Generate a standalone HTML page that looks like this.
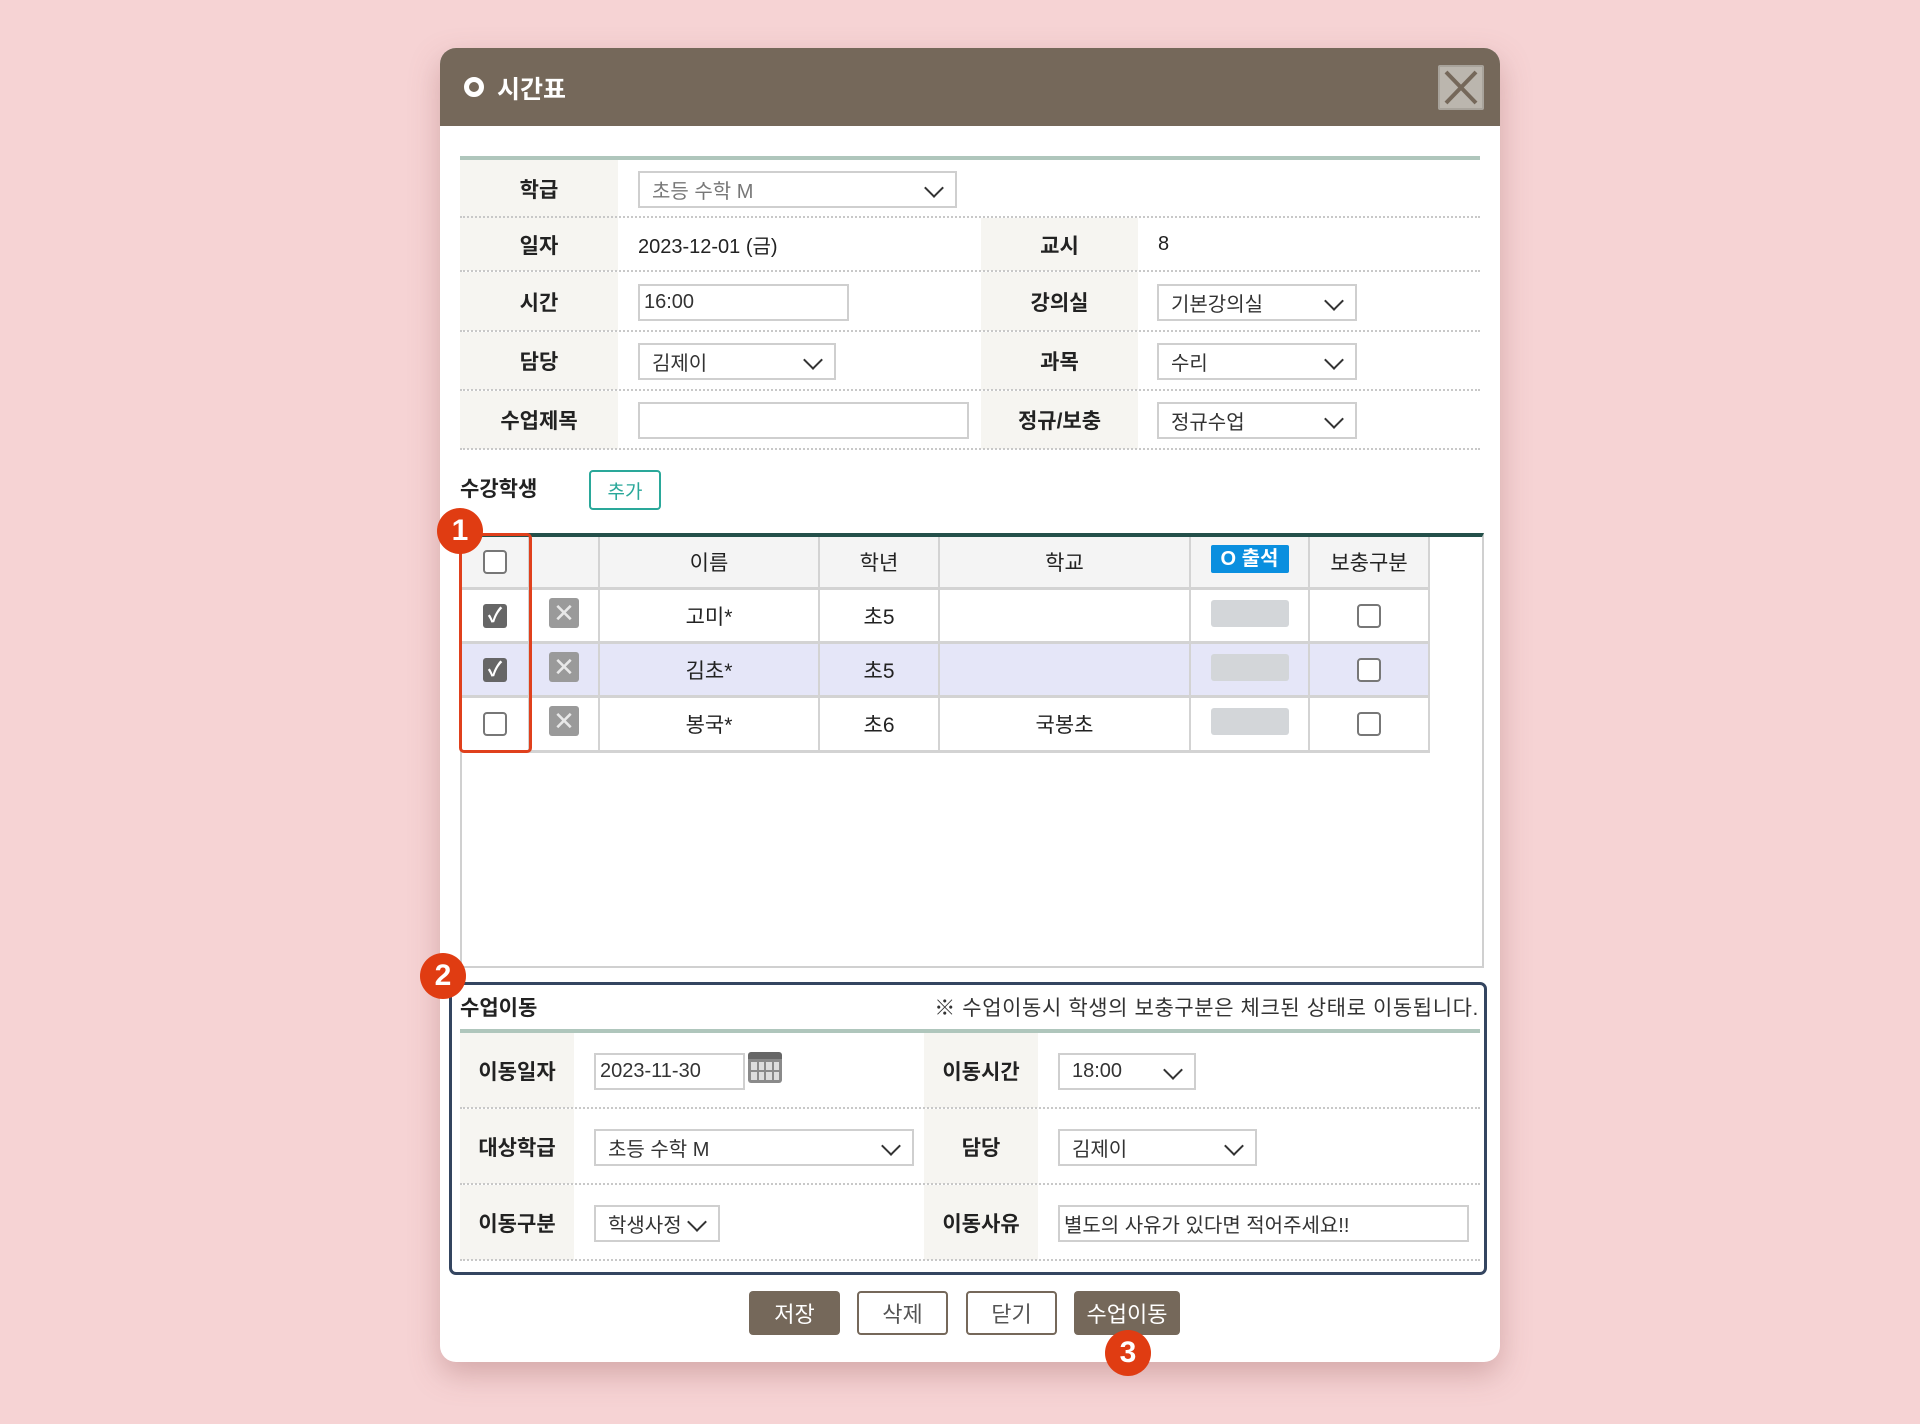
<!DOCTYPE html>
<html><head><meta charset="utf-8"><style>
*{box-sizing:border-box;margin:0;padding:0}
body{width:1920px;height:1424px;background:#f6d3d4;font-family:"Liberation Sans","Noto Sans CJK KR",sans-serif;color:#222;position:relative;overflow:hidden}
.abs{position:absolute}
.modal{left:440px;top:48px;width:1060px;height:1314px;background:#fff;border-radius:16px;box-shadow:0 12px 30px rgba(150,90,90,.35);overflow:hidden}
.hdr{left:0;top:0;width:1060px;height:78px;background:#75685a}
.lbl{background:#f6f5f1;font-weight:bold;font-size:21px;display:flex;align-items:center;justify-content:center}
.dot{border-bottom:2px dotted #c8c8c8}
.fld{border:2px solid #cfcfcf;background:#fff;font-size:20px;display:flex;align-items:center;padding-left:12px;color:#333}
.sel::after{content:"";position:absolute;right:14px;top:8px;width:12px;height:12px;border-right:2px solid #333;border-bottom:2px solid #333;transform:rotate(45deg)}
.txt{font-size:20px;display:flex;align-items:center}
.cell{display:flex;align-items:center;justify-content:center;font-size:21px;border-right:2px solid #d3d3d3;border-bottom:3px solid #d3d3d3}
.cb{width:24px;height:24px;border:2px solid #777;border-radius:4px;background:#fff}
.cbk{width:24px;height:24px;border-radius:3px;background:#666;color:#fff;font-size:20px;line-height:24px;text-align:center;font-weight:bold}
.ic{width:30px;height:30px;background:#9a9a9a;border-radius:3px;color:#e8e8e8;font-size:26px;line-height:30px;text-align:center}
.gr{width:78px;height:27px;background:#d3d6d9;border-radius:3px}
.badge{width:46px;height:46px;border-radius:50%;background:#e03c12;color:#fff;font-weight:bold;font-size:30px;display:flex;align-items:center;justify-content:center}
.btn{height:44px;font-size:22px;display:flex;align-items:center;justify-content:center;border-radius:4px}
.bf{background:#75685a;color:#fff}
.bo{background:#fff;border:2px solid #75685a;color:#555}
</style></head><body>
<div class="abs modal">
 <div class="abs hdr"></div>
 <div class="abs" style="left:24px;top:29px;width:20px;height:20px;border-radius:50%;border:5px solid #fff"></div>
 <div class="abs" style="left:57px;top:22px;color:#fff;font-weight:bold;font-size:25px">시간표</div>
 <div class="abs" style="left:998px;top:17px;width:46px;height:45px;background:#bbb6ae;border:2px solid #a8a39b;border-radius:2px">
  <svg width="42" height="41" viewBox="0 0 42 41"><path d="M6 5L36 36M36 5L6 36" stroke="#75685a" stroke-width="4"/></svg></div>
</div>
<div class="abs" style="left:460px;top:156px;width:1020px;height:4px;background:#afc6bc"></div>
<div class="abs lbl" style="left:460px;top:160px;width:158px;height:58px">학급</div>
<div class="abs dot" style="left:460px;top:216px;width:1020px"></div>
<div class="abs fld sel" style="left:638px;top:171px;width:319px;height:37px;color:#777">초등 수학 M</div>

<div class="abs lbl" style="left:460px;top:218px;width:158px;height:53px">일자</div>
<div class="abs txt" style="left:638px;top:218px;height:53px">2023-12-01 (금)</div>
<div class="abs lbl" style="left:981px;top:218px;width:157px;height:53px">교시</div>
<div class="abs txt" style="left:1158px;top:218px;height:53px">8</div>
<div class="abs dot" style="left:460px;top:270px;width:1020px"></div>

<div class="abs lbl" style="left:460px;top:272px;width:158px;height:59px">시간</div>
<div class="abs fld" style="left:638px;top:284px;width:211px;height:37px;padding-left:4px">16:00</div>
<div class="abs lbl" style="left:981px;top:272px;width:157px;height:59px">강의실</div>
<div class="abs fld sel" style="left:1157px;top:284px;width:200px;height:37px">기본강의실</div>
<div class="abs dot" style="left:460px;top:330px;width:1020px"></div>

<div class="abs lbl" style="left:460px;top:332px;width:158px;height:58px">담당</div>
<div class="abs fld sel" style="left:638px;top:343px;width:198px;height:37px">김제이</div>
<div class="abs lbl" style="left:981px;top:332px;width:157px;height:58px">과목</div>
<div class="abs fld sel" style="left:1157px;top:343px;width:200px;height:37px">수리</div>
<div class="abs dot" style="left:460px;top:389px;width:1020px"></div>

<div class="abs lbl" style="left:460px;top:391px;width:158px;height:58px">수업제목</div>
<div class="abs fld" style="left:638px;top:402px;width:331px;height:37px"></div>
<div class="abs lbl" style="left:981px;top:391px;width:157px;height:58px">정규/보충</div>
<div class="abs fld sel" style="left:1157px;top:402px;width:200px;height:37px">정규수업</div>
<div class="abs dot" style="left:460px;top:448px;width:1020px"></div>

<div class="abs" style="left:460px;top:473px;font-weight:bold;font-size:21px">수강학생</div>
<div class="abs" style="left:589px;top:470px;width:72px;height:40px;border:2px solid #2aa89a;border-radius:4px;color:#2aa89a;font-size:19px;display:flex;align-items:center;justify-content:center">추가</div>

<div class="abs" style="left:460px;top:533px;width:1024px;height:435px;border:2px solid #d0d0d0;border-top:4px solid #24504a"></div>
<div class="abs" style="left:462px;top:537px;width:968px;height:53px;background:#f4f4f4"></div>
<div class="abs" style="left:462px;top:644px;width:968px;height:54px;background:#e5e6f8"></div>
<div class="abs cell" style="left:462px;top:537px;width:68px;height:53px"><div class="cb"></div></div>
<div class="abs cell" style="left:530px;top:537px;width:70px;height:53px"></div>
<div class="abs cell" style="left:600px;top:537px;width:220px;height:53px">이름</div>
<div class="abs cell" style="left:820px;top:537px;width:120px;height:53px">학년</div>
<div class="abs cell" style="left:940px;top:537px;width:251px;height:53px">학교</div>
<div class="abs cell" style="left:1191px;top:537px;width:119px;height:53px;align-items:flex-start;padding-top:8px"><div style="background:#0a8fdf;color:#fff;font-weight:bold;font-size:20px;width:78px;height:28px;border-radius:2px;text-align:center;line-height:28px">O 출석</div></div>
<div class="abs cell" style="left:1310px;top:537px;width:120px;height:53px">보충구분</div>

<div class="abs cell" style="left:462px;top:590px;width:68px;height:54px"><div class="cbk">✓</div></div>
<div class="abs cell" style="left:530px;top:590px;width:70px;height:54px;align-items:flex-start;padding-top:8px"><div class="ic">✕</div></div>
<div class="abs cell" style="left:600px;top:590px;width:220px;height:54px">고미*</div>
<div class="abs cell" style="left:820px;top:590px;width:120px;height:54px">초5</div>
<div class="abs cell" style="left:940px;top:590px;width:251px;height:54px"></div>
<div class="abs cell" style="left:1191px;top:590px;width:119px;height:54px;align-items:flex-start;padding-top:10px"><div class="gr"></div></div>
<div class="abs cell" style="left:1310px;top:590px;width:120px;height:54px"><div class="cb"></div></div>

<div class="abs cell" style="left:462px;top:644px;width:68px;height:54px"><div class="cbk">✓</div></div>
<div class="abs cell" style="left:530px;top:644px;width:70px;height:54px;align-items:flex-start;padding-top:8px"><div class="ic">✕</div></div>
<div class="abs cell" style="left:600px;top:644px;width:220px;height:54px">김초*</div>
<div class="abs cell" style="left:820px;top:644px;width:120px;height:54px">초5</div>
<div class="abs cell" style="left:940px;top:644px;width:251px;height:54px"></div>
<div class="abs cell" style="left:1191px;top:644px;width:119px;height:54px;align-items:flex-start;padding-top:10px"><div class="gr"></div></div>
<div class="abs cell" style="left:1310px;top:644px;width:120px;height:54px"><div class="cb"></div></div>

<div class="abs cell" style="left:462px;top:698px;width:68px;height:55px"><div class="cb"></div></div>
<div class="abs cell" style="left:530px;top:698px;width:70px;height:55px;align-items:flex-start;padding-top:8px"><div class="ic">✕</div></div>
<div class="abs cell" style="left:600px;top:698px;width:220px;height:55px">봉국*</div>
<div class="abs cell" style="left:820px;top:698px;width:120px;height:55px">초6</div>
<div class="abs cell" style="left:940px;top:698px;width:251px;height:55px">국봉초</div>
<div class="abs cell" style="left:1191px;top:698px;width:119px;height:55px;align-items:flex-start;padding-top:10px"><div class="gr"></div></div>
<div class="abs cell" style="left:1310px;top:698px;width:120px;height:55px"><div class="cb"></div></div>

<div class="abs" style="left:459px;top:533px;width:73px;height:220px;border:3px solid #e0401c;border-radius:5px"></div>
<div class="abs badge" style="left:437px;top:508px">1</div>

<div class="abs" style="left:449px;top:982px;width:1038px;height:293px;border:3px solid #344560;border-radius:7px"></div>
<div class="abs badge" style="left:420px;top:953px">2</div>
<div class="abs" style="left:460px;top:992px;font-weight:bold;font-size:21px">수업이동</div>
<div class="abs" style="right:441px;top:992px;font-size:21px;letter-spacing:0.6px;color:#333">※ 수업이동시 학생의 보충구분은 체크된 상태로 이동됩니다.</div>
<div class="abs" style="left:460px;top:1029px;width:1020px;height:4px;background:#afc6bc"></div>

<div class="abs lbl" style="left:460px;top:1033px;width:114px;height:75px">이동일자</div>
<div class="abs fld" style="left:594px;top:1053px;width:151px;height:37px;padding-left:4px">2023-11-30</div>
<div class="abs" style="left:748px;top:1052px;width:34px;height:31px;background:#8a8a8a;border-radius:3px;border-top:7px solid #666;display:grid;grid-template-columns:repeat(4,1fr);gap:2px;padding:3px">
 <i style="background:#ddd"></i><i style="background:#ddd"></i><i style="background:#ddd"></i><i style="background:#ddd"></i><i style="background:#ddd"></i><i style="background:#ddd"></i><i style="background:#ddd"></i><i style="background:#ddd"></i></div>
<div class="abs lbl" style="left:924px;top:1033px;width:114px;height:75px">이동시간</div>
<div class="abs fld sel" style="left:1058px;top:1053px;width:138px;height:37px">18:00</div>
<div class="abs dot" style="left:460px;top:1107px;width:1020px"></div>

<div class="abs lbl" style="left:460px;top:1109px;width:114px;height:75px">대상학급</div>
<div class="abs fld sel" style="left:594px;top:1129px;width:320px;height:37px">초등 수학 M</div>
<div class="abs lbl" style="left:924px;top:1109px;width:114px;height:75px">담당</div>
<div class="abs fld sel" style="left:1058px;top:1129px;width:199px;height:37px">김제이</div>
<div class="abs dot" style="left:460px;top:1183px;width:1020px"></div>

<div class="abs lbl" style="left:460px;top:1185px;width:114px;height:75px">이동구분</div>
<div class="abs fld sel" style="left:594px;top:1205px;width:126px;height:37px">학생사정</div>
<div class="abs lbl" style="left:924px;top:1185px;width:114px;height:75px">이동사유</div>
<div class="abs fld" style="left:1058px;top:1205px;width:411px;height:37px;padding-left:4px">별도의 사유가 있다면 적어주세요!!</div>
<div class="abs dot" style="left:460px;top:1259px;width:1020px"></div>

<div class="abs btn bf" style="left:749px;top:1291px;width:91px">저장</div>
<div class="abs btn bo" style="left:857px;top:1291px;width:91px">삭제</div>
<div class="abs btn bo" style="left:966px;top:1291px;width:91px">닫기</div>
<div class="abs btn bf" style="left:1074px;top:1291px;width:106px">수업이동</div>
<div class="abs badge" style="left:1105px;top:1330px">3</div>
</body></html>
